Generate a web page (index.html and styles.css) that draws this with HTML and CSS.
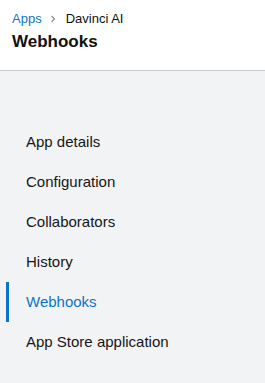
FILE: index.html
```html
<!DOCTYPE html>
<html lang="en">
<head>
    <meta charset="UTF-8">
    <meta name="viewport" content="width=device-width, initial-scale=1.0">
    <title>Webhooks</title>
    <link rel="stylesheet" href="styles.css">
</head>
<body>

<div class="header">
    <div class="breadcrumb">
        <a href="#" class="crumb-link">Apps</a>
        <svg class="chevron" width="6" height="8" viewBox="0 0 6 8"><path d="M1.5 1 L4.5 4 L1.5 7" fill="none" stroke="#8a8a8a" stroke-width="1.1"/></svg>
        <span>Davinci AI</span>
    </div>
    <h1 class="title">Webhooks</h1>
</div>

<ul class="nav">
    <li class="nav-item">App details</li>
    <li class="nav-item">Configuration</li>
    <li class="nav-item">Collaborators</li>
    <li class="nav-item">History</li>
    <li class="nav-item active">Webhooks</li>
    <li class="nav-item">App Store application</li>
</ul>

</body>
</html>
```

FILE: styles.css
```css
html, body { height: 100%; }
body { font-family: "Liberation Sans", Arial, sans-serif; margin: 0; padding: 0; color: #111; background: #f2f3f5; }

/* Header */
.header { background: #fff; height: 70px; border-bottom: 1px solid #c8c8cc; padding: 0 12px; box-sizing: content-box; }
.breadcrumb { display: flex; align-items: center; font-size: 13px; line-height: 16px; padding-top: 11px; }
.crumb-link { color: #0a74c9; text-decoration: none; }
.chevron { margin: 0 10px 0 8px; }
.title { font-size: 17px; font-weight: bold; margin: 0; line-height: 20px; padding-top: 5px; }

/* Side nav */
.nav { list-style: none; margin: 51px 0 0; padding: 0; }
.nav-item { position: relative; height: 40px; line-height: 40px; padding-left: 26px; font-size: 15px; color: #161616; }
.nav-item.active { color: #0a74c9; }
.nav-item.active::before { content: ""; position: absolute; left: 6px; top: 0; width: 3px; height: 40px; background: #0a74c9; }
```
